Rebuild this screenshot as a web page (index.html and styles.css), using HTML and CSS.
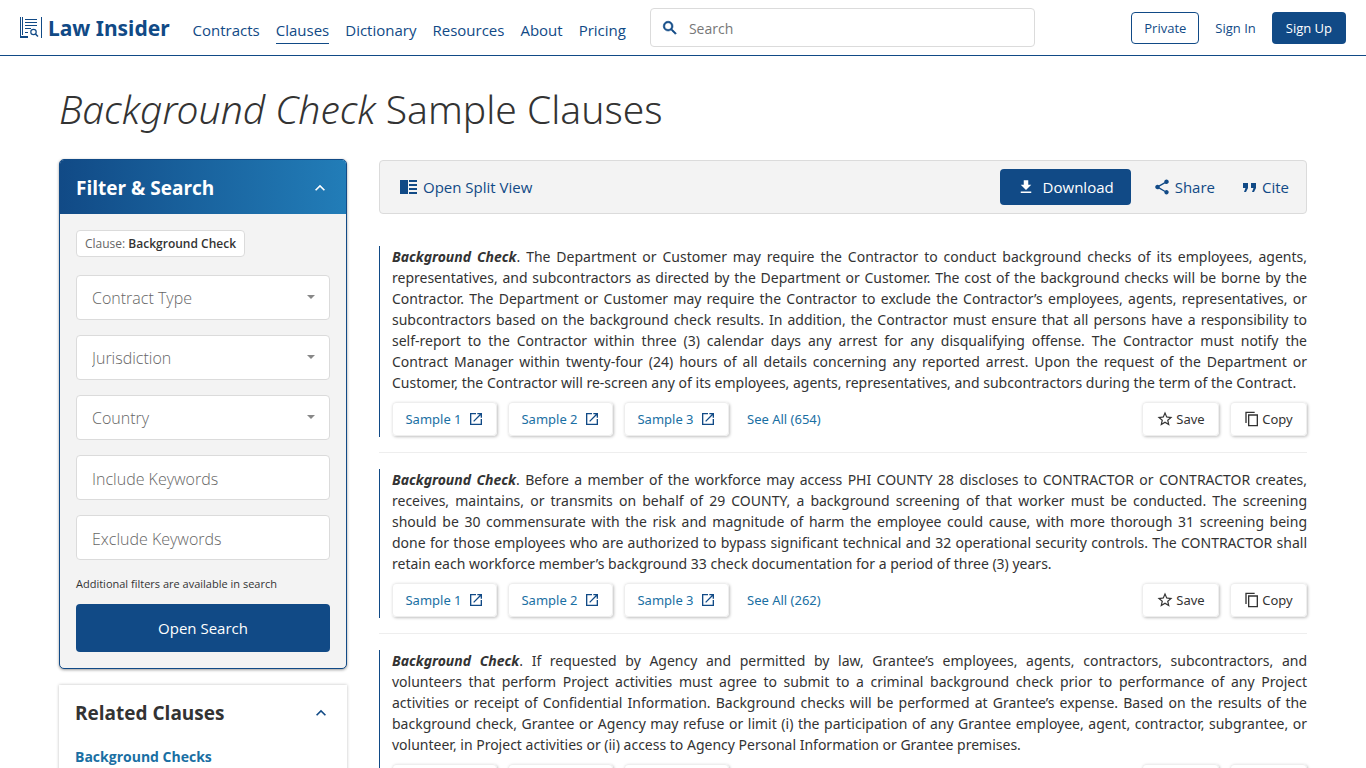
FILE: index.html
```html
<!DOCTYPE html>
<html lang="en">
<head>
<meta charset="utf-8">
<meta name="viewport" content="width=device-width, initial-scale=1">
<title>Background Check Sample Clauses | Law Insider</title>
<link rel="stylesheet" href="styles.css">
</head>
<body>
<svg class="sprite" aria-hidden="true">
  <symbol id="open" viewBox="0 0 24 24"><path d="M19 19H5V5h7V3H3v18h18v-9h-2v7zM14 3v2h3.590l-9.830 9.830 1.410 1.410L19 6.410V10h2V3h-7z"/></symbol>
  <symbol id="star" viewBox="0 0 24 24"><path d="M22 9.240l-7.190-.62L12 2 9.190 8.630 2 9.240l5.460 4.730L5.820 21 12 17.270 18.180 21l-1.630-7.030L22 9.240zM12 15.400l-3.760 2.270 1-4.280-3.320-2.880 4.380-.38L12 6.100l1.710 4.040 4.380.38-3.320 2.880 1 4.280L12 15.400z"/></symbol>
  <symbol id="copy" viewBox="0 0 24 24"><path d="M16 1H2v17h2V3h12V1zm5 4H6v18h15V5zm-2 16H8V7h11v14z"/></symbol>
  <symbol id="up" viewBox="0 0 24 24"><path d="M12 8l-6 6 1.410 1.410L12 10.830l4.590 4.580L18 14z"/></symbol>
</svg>
<header class="topbar">
  <a class="brand" href="#">
    <svg class="brand-mark" viewBox="0 0 23 22" aria-hidden="true">
      <path d="M0 0h1v20h7v1H0zM2 0h1v18H2zM1 19h7v1H1zM21 0h1v21h-1z"/>
      <path d="M5 2h12v1H5zM5 5h12v1H5zM5 8h12v1H5zM5 11h6v1H5zM5 15h3v1H5z"/>
      <circle cx="13.500" cy="15" r="2.700" fill="#fff" stroke="currentColor" stroke-width="1.200"/>
      <path d="M15.500 17l2.500 2.500" stroke="currentColor" stroke-width="1.500"/>
    </svg>
    <span>Law Insider</span>
  </a>
  <nav class="nav" aria-label="Main">
    <a href="#">Contracts</a>
    <a class="active" href="#">Clauses</a>
    <a href="#">Dictionary</a>
    <a href="#">Resources</a>
    <a href="#">About</a>
    <a href="#">Pricing</a>
  </nav>
  <form class="search">
    <svg class="icon-18" viewBox="0 0 24 24" aria-hidden="true"><path stroke="currentColor" stroke-width=".8" d="M15.500 14h-.79l-.28-.27A6.470 6.470 0 0 0 16 9.500 6.500 6.500 0 1 0 9.500 16c1.610 0 3.090-.59 4.230-1.570l.27.28v.79l5 4.990L20.490 19l-4.990-5zm-6 0C7.010 14 5 11.990 5 9.500S7.010 5 9.500 5 14 7.010 14 9.500 11.990 14 9.500 14z"/></svg>
    <input type="search" placeholder="Search" aria-label="Search">
  </form>
  <div class="account">
    <button class="btn-private" type="button">Private</button>
    <a class="sign-in" href="#">Sign In</a>
    <a class="sign-up" href="#">Sign Up</a>
  </div>
</header>
<div class="page">
  <h1 class="title"><em>Background Check</em> Sample Clauses</h1>
  <div class="columns">
    <aside class="sidebar">
      <section class="filter">
        <div class="filter-head">
          <h2>Filter &amp; Search</h2>
          <button class="toggle" type="button" aria-label="Collapse filters"><svg class="icon-20"><use href="#up"/></svg></button>
        </div>
        <form class="filter-body">
          <span class="chip">Clause: <b>Background Check</b></span>
          <div class="fields">
            <div class="select-wrap"><select class="field" aria-label="Contract Type"><option>Contract Type</option></select></div>
            <div class="select-wrap"><select class="field" aria-label="Jurisdiction"><option>Jurisdiction</option></select></div>
            <div class="select-wrap"><select class="field" aria-label="Country"><option>Country</option></select></div>
            <input class="field" type="text" placeholder="Include Keywords" aria-label="Include Keywords">
            <input class="field" type="text" placeholder="Exclude Keywords" aria-label="Exclude Keywords">
          </div>
          <p class="hint">Additional filters are available in search</p>
          <button class="btn-search" type="button">Open Search</button>
        </form>
      </section>
      <section class="related">
        <div class="related-head">
          <h2>Related Clauses</h2>
          <button class="toggle" type="button" aria-label="Collapse related clauses"><svg class="icon-20"><use href="#up"/></svg></button>
        </div>
        <a class="related-link" href="#">Background Checks</a>
      </section>
    </aside>
    <main class="main">
      <div class="toolbar">
        <a class="tool" href="#"><svg class="icon-split" viewBox="0 0 17 14" aria-hidden="true"><path d="M0 0h8v14H0zM9 0h8v2H9zM9 4h8v2H9zM9 8h8v2H9zM9 12h8v2H9z"/></svg>Open Split View</a>
        <div class="tools">
          <button class="download" type="button"><svg class="icon-18" viewBox="0 0 24 24" aria-hidden="true"><path d="M19 9h-4V3H9v6H5l7 7 7-7zM5 18v2h14v-2H5z"/></svg>Download</button>
          <button class="tool" type="button"><svg class="icon-18" viewBox="0 0 24 24" aria-hidden="true"><path d="M18 16.080c-.76 0-1.440.3-1.960.77L8.910 12.700c.05-.23.09-.46.09-.7s-.04-.47-.09-.7l7.050-4.110c.54.5 1.250.81 2.040.81 1.660 0 3-1.340 3-3s-1.340-3-3-3-3 1.340-3 3c0 .24.04.47.09.7L8.040 9.810C7.500 9.310 6.790 9 6 9c-1.660 0-3 1.340-3 3s1.340 3 3 3c.79 0 1.500-.31 2.040-.81l7.120 4.160c-.05.21-.08.43-.08.65 0 1.610 1.310 2.920 2.920 2.920s2.920-1.310 2.920-2.920-1.310-2.920-2.920-2.920z"/></svg>Share</button>
          <button class="tool" type="button"><svg class="icon-quote" viewBox="0 0 13 9" aria-hidden="true"><path d="M0 0h5v5L3 9H1l1.500-4H0zM8 0h5v5l-2 4H9l1.500-4H8z"/></svg>Cite</button>
        </div>
      </div>
      <article class="clause">
        <div class="clause-body">
          <p class="text"><b>Background Check</b>. The Department or Customer may require the Contractor to conduct background checks of its employees, agents, representatives, and subcontractors as directed by the Department or Customer. The cost of the background checks will be borne by the Contractor. The Department or Customer may require the Contractor to exclude the Contractor’s employees, agents, representatives, or subcontractors based on the background check results. In addition, the Contractor must ensure that all persons have a responsibility to self-report to the Contractor within three (3) calendar days any arrest for any disqualifying offense. The Contractor must notify the Contract&nbsp;Manager within twenty-four (24) hours of all details concerning any reported arrest. Upon the request of the Department or Customer,&nbsp;the Contractor will re-screen any of its employees, agents, representatives, and subcontractors during the term of the Contract.</p>
          <div class="actions">
            <a class="pill" href="#">Sample 1<svg class="icon-16"><use href="#open"/></svg></a>
            <a class="pill" href="#">Sample 2<svg class="icon-16"><use href="#open"/></svg></a>
            <a class="pill" href="#">Sample 3<svg class="icon-16"><use href="#open"/></svg></a>
            <a class="see-all" href="#">See All (654)</a>
            <button class="pill save" type="button"><svg class="icon-18"><use href="#star"/></svg>Save</button>
            <button class="pill copy" type="button"><svg class="icon-16"><use href="#copy"/></svg>Copy</button>
          </div>
        </div>
      </article>
      <article class="clause">
        <div class="clause-body">
          <p class="text"><b>Background Check</b>. Before a member of the workforce may access PHI COUNTY 28 discloses to CONTRACTOR or CONTRACTOR creates, receives, maintains, or transmits on behalf of 29 COUNTY, a background screening of that worker must be conducted. The screening should be 30 commensurate with the risk and magnitude of harm the employee could cause, with more thorough 31 screening being done&nbsp;for those employees who are authorized to bypass significant technical and 32 operational security controls. The CONTRACTOR shall retain&nbsp;each workforce member’s background 33 check documentation for a period of three (3) years.</p>
          <div class="actions">
            <a class="pill" href="#">Sample 1<svg class="icon-16"><use href="#open"/></svg></a>
            <a class="pill" href="#">Sample 2<svg class="icon-16"><use href="#open"/></svg></a>
            <a class="pill" href="#">Sample 3<svg class="icon-16"><use href="#open"/></svg></a>
            <a class="see-all" href="#">See All (262)</a>
            <button class="pill save" type="button"><svg class="icon-18"><use href="#star"/></svg>Save</button>
            <button class="pill copy" type="button"><svg class="icon-16"><use href="#copy"/></svg>Copy</button>
          </div>
        </div>
      </article>
      <article class="clause">
        <div class="clause-body">
          <p class="text"><b>Background Check</b>. If requested by Agency and permitted by law, Grantee’s employees, agents, contractors, subcontractors, and volunteers&nbsp;that perform Project activities must agree to submit to a criminal background check prior to performance of any Project activities&nbsp;or&nbsp;receipt of Confidential Information. Background checks will be performed at Grantee’s expense. Based on the results of the background&nbsp;check, Grantee or Agency may refuse or limit (i) the participation of any Grantee employee, agent, contractor, subgrantee, or volunteer,&nbsp;in Project activities or (ii) access to Agency Personal Information or Grantee premises.</p>
          <div class="actions">
            <a class="pill" href="#">Sample 1<svg class="icon-16"><use href="#open"/></svg></a>
            <a class="pill" href="#">Sample 2<svg class="icon-16"><use href="#open"/></svg></a>
            <a class="pill" href="#">Sample 3<svg class="icon-16"><use href="#open"/></svg></a>
            <button class="pill save" type="button"><svg class="icon-18"><use href="#star"/></svg>Save</button>
            <button class="pill copy" type="button"><svg class="icon-16"><use href="#copy"/></svg>Copy</button>
          </div>
        </div>
      </article>
    </main>
  </div>
</div>
</body>
</html>
```
FILE: styles.css
```css
:root {
  --navy: #114a86;
  --blue: #1a6fa3;
  --ink: #333;
  --line: #dbdbdb;
  --panel: #f3f3f3;
}
* { box-sizing: border-box; }
html { scrollbar-width: none; }
body {
  margin: 0;
  background: #fff;
  color: var(--ink);
  font: 14px/21px "Open Sans", "Noto Sans", sans-serif;
}
a { color: inherit; text-decoration: none; }
button, input, select { font: inherit; color: inherit; margin: 0; }
button { cursor: pointer; background: none; border: 0; padding: 0; }
h1, h2, p { margin: 0; }
svg { fill: currentColor; flex: none; }
.sprite { position: absolute; width: 0; height: 0; }
.icon-16 { width: 16px; height: 16px; }
.icon-18 { width: 18px; height: 18px; }
.icon-20 { width: 20px; height: 20px; }
.icon-split { width: 17px; height: 14px; }
.icon-quote { width: 13px; height: 9px; }

.topbar {
  display: flex;
  align-items: center;
  height: 56px;
  padding: 0 20px;
  border-bottom: 1px solid var(--navy);
  color: var(--navy);
}
.brand {
  display: flex;
  align-items: center;
  gap: 5px;
  font: 700 21px/32px "Noto Sans", sans-serif;
}
.brand-mark { width: 23px; height: 22px; }
.nav { display: flex; gap: 16px; margin: 6px 0 0 23px; font-size: 15px; }
.nav a { padding: 2px 0; border-bottom: 1px solid transparent; }
.nav .active { border-color: var(--navy); }
.search {
  display: flex;
  align-items: center;
  gap: 10px;
  width: 385px;
  height: 39px;
  margin-left: 24px;
  padding: 0 10px;
  border: 1px solid var(--line);
  border-radius: 4px;
}
.search input { flex: 1; min-width: 0; padding: 2px 0 0; border: 0; outline: 0; background: none; }
.search input::placeholder { color: #777; opacity: 1; }
.account { display: flex; align-items: center; margin-left: auto; font-size: 13px; }
.btn-private { height: 32px; padding: 1px 12px 0; border: 1px solid var(--navy); border-radius: 4px; }
.sign-in { padding: 1px 16px 0; }
.sign-up { padding: 6px 14px 5px; border-radius: 4px; background: var(--navy); color: #fff; }

.page { max-width: 1248px; margin: 0 auto; }
.title { padding: 23px 0 20px; font-family: "Noto Sans", sans-serif; font-size: 39px; font-weight: 300; line-height: 60px; }
.columns { display: grid; grid-template-columns: 288px minmax(0, 1fr); gap: 32px; }
.filter {
  overflow: hidden;
  border: 1px solid var(--navy);
  border-radius: 5px;
  background: var(--panel);
  box-shadow: 0 1px 3px rgba(0, 0, 0, .4);
}
.filter-head, .related-head { display: flex; align-items: center; justify-content: space-between; }
.filter-head { height: 54px; padding: 2px 16px 0; background: linear-gradient(90deg, var(--navy), #227db8); color: #fff; }
.sidebar h2 { font-size: 19px; line-height: 28px; font-weight: 700; }
.toggle { display: flex; }
.filter-body { padding: 16px; }
.chip {
  display: inline-block;
  padding: 0 8px;
  border: 1px solid var(--line);
  border-radius: 4px;
  background: #fff;
  color: #666;
  font-size: 12px;
  line-height: 25px;
}
.chip b { color: var(--ink); font-weight: 600; }
.fields { display: grid; gap: 15px; margin-top: 18px; }
.field {
  display: block;
  width: 100%;
  height: 45px;
  padding: 2px 15px 0;
  border: 1px solid var(--line);
  border-radius: 4px;
  background: #fff;
  color: #666;
  font-size: 16px;
  font-weight: 300;
  appearance: none;
}
.field::placeholder { color: #666; opacity: 1; }
.select-wrap { position: relative; }
.select-wrap::after {
  content: "";
  position: absolute;
  right: 15px;
  top: 20px;
  border: 4px solid transparent;
  border-top-color: #888;
  border-bottom: 0;
}
.hint { margin: 14px 0 10px; font-size: 11px; line-height: 20px; }
.btn-search { width: 100%; height: 48px; border-radius: 4px; background: var(--navy); color: #fff; font-size: 15px; }
.related { margin-top: 16px; padding: 14px 16px; box-shadow: 0 0 3px rgba(0, 0, 0, .25); }
.related .toggle { color: var(--navy); }
.related-link { display: block; margin-top: 19px; color: var(--blue); font-weight: 700; }

.toolbar {
  display: flex;
  align-items: center;
  justify-content: space-between;
  height: 54px;
  margin: 1px 0 32px;
  padding: 0 17px 0 20px;
  border: 1px solid var(--line);
  border-radius: 4px;
  background: var(--panel);
  color: var(--navy);
  font-size: 15px;
}
.tool { display: flex; align-items: center; gap: 6px; }
.tools { display: flex; align-items: center; gap: 22px; }
.tools .tool { gap: 4px; }
.tools .tool:last-child { gap: 6px; margin-left: 6px; }
.download { display: flex; align-items: center; gap: 8px; height: 36px; padding: 0 17px; border-radius: 4px; background: var(--navy); color: #fff; }

.clause { margin-bottom: 16px; padding-bottom: 15px; border-bottom: 1px solid #eee; font-family: "Noto Sans", sans-serif; }
.clause-body { padding: 0 0 1px 12px; border-left: 1px solid var(--navy); }
.text { text-align: justify; }
.text b { font-style: italic; }
.actions { display: flex; align-items: center; gap: 11px; margin-top: 9px; color: var(--blue); font-size: 13px; }
.pill {
  display: flex;
  align-items: center;
  justify-content: center;
  gap: 6px;
  width: 105px;
  height: 34px;
  border: 1px solid #eee;
  border-radius: 4px;
  box-shadow: 1px 1px 3px rgba(0, 0, 0, .25);
}
.pill svg { color: var(--navy); }
.see-all { margin-left: 7px; }
.save, .copy { gap: 2px; width: 77px; color: var(--ink); }
.save { margin-left: auto; }
.save svg, .copy svg { color: var(--ink); }
```
